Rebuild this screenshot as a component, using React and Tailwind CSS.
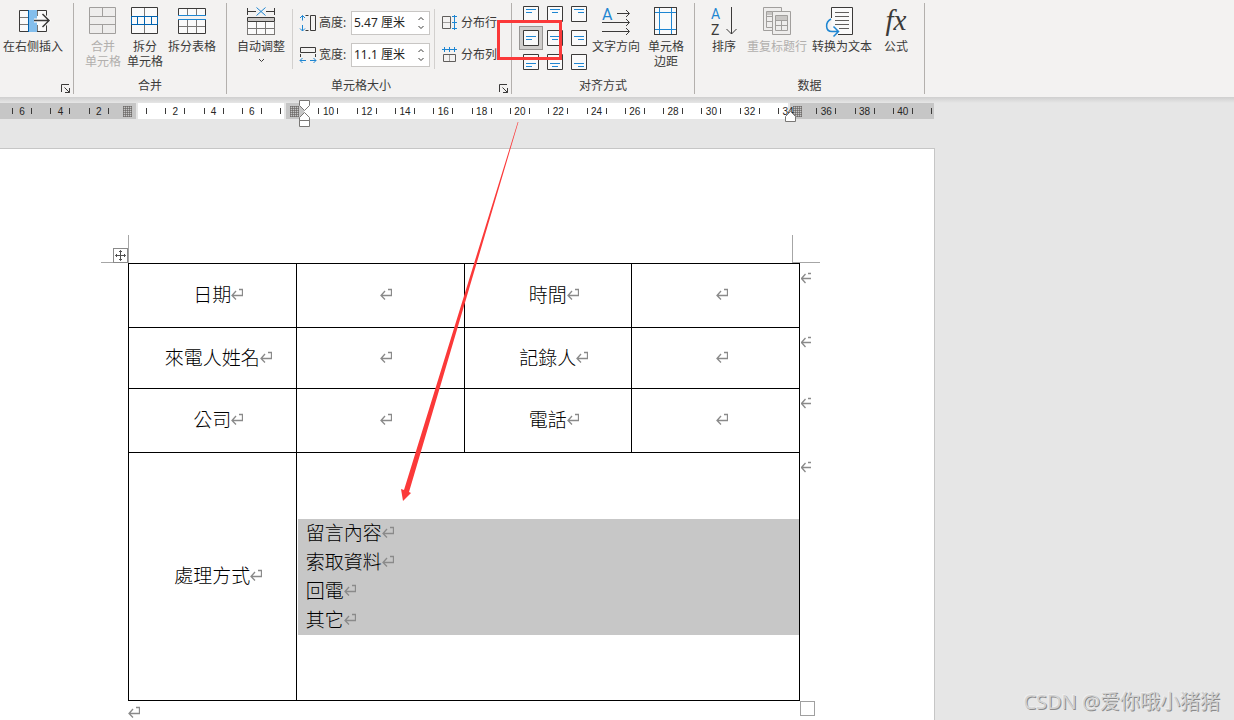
import clsx from "clsx";

const INK = "#3b3a39";
const BLUE = "#1e86d2";
const MUTED = "#a19f9d";

function Icon({ children, size = 32 }) {
  return (
    <svg width={size} height={size} viewBox={`0 0 ${size} ${size}`} fill="none" stroke={INK} className="shrink-0 overflow-visible" aria-hidden="true">
      {children}
    </svg>
  );
}

/* table icons */

const InsertRightIcon = () => (
  <Icon>
    <path d="M2.5 5.5h27v21h-27z" fill="#fafafa" />
    <path d="M3 12.5h8M3 19.5h8M20.5 6v5M20.5 20v6" stroke="#797775" />
    <path d="M11 5h9v22h-9z" fill="#83beec" stroke="none" />
    <path d="M11.5 5v22" stroke="#0063b1" />
    <path d="M17 15.5h15M25 9l6.5 6.5L25 22" stroke="#fafafa" strokeWidth="4" />
    <path d="M17 15.5h15M25.5 9l6.5 6.5-6.5 6.5" strokeWidth="1.5" />
  </Icon>
);

const MergeIcon = () => (
  <Icon>
    <path d="M2.5 2.5h26v26h-26z" fill="#eeedec" stroke={MUTED} />
    <path d="M3 11.5h25M3 19.5h25M15.5 3v8M15.5 20v8" stroke={MUTED} />
  </Icon>
);

const SplitIcon = () => (
  <Icon>
    <path d="M2.5 2.5h26v26h-26z" fill="#fafafa" />
    <path d="M15.5 3v25" stroke="#797775" />
    <path d="M2.5 11.5h26v8h-26zM8.5 12v7M15.5 12v7M22.5 12v7" stroke="#0063b1" />
  </Icon>
);

const SplitTableIcon = () => (
  <Icon>
    <path d="M2.5 3.5h27v7h-27zM2.5 14.5h27v14h-27z" fill="#fafafa" />
    <path d="M11.5 4v6M20.5 4v6M11.5 15v13M20.5 15v13M3 21.5h26" stroke="#797775" />
    <path d="M2 10.5h28M2 14.5h28" stroke={BLUE} />
  </Icon>
);

const AutoFitIcon = () => (
  <Icon>
    <path d="M3 17h26v13H3z" fill="#fafafa" stroke="none" />
    <path d="M2.5 3v7M29.5 3v7M3 6.5h8M21 6.5h8" />
    <path d="M11.5 2.5l9 8M20.5 2.5l-9 8" stroke={BLUE} />
    <path d="M2.5 12.5h27v4h-27z" fill="#c8c6c4" />
    <path d="M2.5 17v13M29.5 17v13M11.5 17v13M20.5 17v13M3 23.5h26M3 29.5h26" stroke="#797775" />
  </Icon>
);

const HeightIcon = () => (
  <Icon size={18}>
    <path d="M3.5 1.5v5M3.5 11v6M1 4l2.5-2.5L6 4M1 14.5L3.5 17 6 14.5" stroke={BLUE} />
    <path d="M6.5 1.5h3M6.5 16.5h3M11.5 1.5h5v15h-5z" />
  </Icon>
);

const WidthIcon = () => (
  <Icon size={18}>
    <path d="M1.5 1.5h15v5h-15zM1.5 8v3M16.5 8v3" />
    <path d="M1 14.5h6M11 14.5h6M3.5 12L1 14.5 3.5 17M14.5 12l2.5 2.5-2.5 2.5" stroke={BLUE} />
  </Icon>
);

const RowsIcon = () => (
  <Icon size={18}>
    <path d="M1.5 2.5h8v12h-8z" stroke="#605e5c" />
    <path d="M2 8.5h7" stroke="#a19f9d" />
    <path d="M13.5 1v15M11 2.5h5M11 8.5h5M11 14.5h5" stroke={BLUE} />
  </Icon>
);

const ColumnsIcon = () => (
  <Icon size={18}>
    <path d="M2.5 8.5h12v7h-12z" stroke="#605e5c" />
    <path d="M8.5 9v6" stroke="#a19f9d" />
    <path d="M1 3.5h15M3.5 1v5M8.5 1v5M13.5 1v5" stroke={BLUE} />
  </Icon>
);

/* alignment icons */

const longLine = "M3 0h10";
const shortLine = ["M3 0h6", "M5 0h6", "M7 0h6"];

function AlignIcon({ row, col }) {
  const y = 3.5 + row * 3;
  return (
    <Icon size={16}>
      <path d="M.5 .5h15v15H.5z" fill="#fafafa" />
      <g stroke={BLUE}>
        <path d={longLine} transform={`translate(0 ${y})`} />
        <path d={shortLine[col]} transform={`translate(0 ${y + 3})`} />
      </g>
    </Icon>
  );
}

const DirectionIcon = () => (
  <Icon>
    <text x="2" y="15" fontSize="16" fontFamily="Roboto, sans-serif" fill={BLUE} stroke="none">A</text>
    <path d="M17 8.5h12M26 5l3.5 3.5L26 12M2 17.5h27M26 14l3.5 3.5L26 21M2 26.5h27M26 23l3.5 3.5L26 30" />
  </Icon>
);

const MarginsIcon = () => (
  <Icon>
    <path d="M4.5 2.5h22v27h-22z" fill="#fafafa" />
    <path d="M9.5 3v26M21.5 3v26M5 7.5h21M5 24.5h21" stroke={BLUE} />
    <path d="M4.5 2.5h22v27h-22z" />
  </Icon>
);

/* data icons */

const SortIcon = () => (
  <Icon>
    <g fontSize="14" fontFamily="Roboto, sans-serif" stroke="none">
      <text x="3" y="14" fill={BLUE}>A</text>
      <text x="3" y="30" fill={INK}>Z</text>
    </g>
    <path d="M23.5 2v27M18.5 24l5 5 5-5" />
  </Icon>
);

const RepeatIcon = () => (
  <Icon>
    <g stroke={MUTED}>
      <path d="M2.5 2.5h18v23h-18z" fill="#eeedec" />
      <path d="M5.5 6.5h6v16h-6zM6 11.5h5M6 16.5h5" />
      <path d="M6 7h5v3H6z" fill="#c8c6c4" stroke="none" />
      <path d="M11.5 6.5h18v23h-18z" fill="#eeedec" />
      <path d="M14.5 10.5h12v15h-12zM15 15.5h11M15 20.5h11M20.5 15v10" />
      <path d="M15 11h11v4H15z" fill="#c8c6c4" stroke="none" />
    </g>
  </Icon>
);

const ConvertIcon = () => (
  <Icon>
    <path d="M5.5 2.5h21v27h-21z" fill="#fafafa" stroke="none" />
    <path d="M5.5 13V2.5h21v27H12" />
    <path d="M9 7.5h14M9 11.5h14M9 15.5h14M9 19.5h14M13 23.5h10" stroke="#605e5c" />
    <path d="M5 14C-1 18-1 27 6 27h6" stroke="#f3f2f1" strokeWidth="4" />
    <path d="M5 14C-1 17-1 26.5 6 26.5h6M7.5 21.5l5 5-5 5" stroke={BLUE} strokeWidth="1.5" />
  </Icon>
);

const FormulaIcon = () => (
  <Icon>
    <text x="16" y="25" fontSize="29" textAnchor="middle" fontStyle="italic" fontFamily="Liberation Serif, serif" fill={INK} stroke="none">fx</text>
  </Icon>
);

/* ribbon */

function BigButton({ icon, lines, disabled, className, children }) {
  return (
    <button
      type="button"
      disabled={disabled}
      className={clsx("flex shrink-0 flex-col items-center whitespace-nowrap text-xs leading-[15px] disabled:text-[#b1afad]", className)}
    >
      {icon}
      <span className="mt-0.5">
        {lines.map((line) => (
          <span key={line} className="block">{line}</span>
        ))}
      </span>
      {children}
    </button>
  );
}

function Group({ title, launcher, className, bodyClass, titleClass, children }) {
  return (
    <section className={clsx("flex h-[91px] shrink-0 flex-col border-r border-[#b3b0ad] pt-0.5", className)}>
      <div className={clsx("flex h-[74px] items-start", bodyClass)}>{children}</div>
      <div className="flex h-4 items-center">
        <h2 className={clsx("flex-1 text-center text-xs", titleClass)}>{title}</h2>
        {launcher && (
          <button type="button" aria-label={`${title || "行和列"}设置`} className="mt-1.5 mr-0.5 ml-1">
            <svg width="10" height="10" fill="none" stroke={INK} aria-hidden="true">
              <path d="M.5 8V.5H8M3.5 3.5l5 5M8.5 4v4.5H4" />
            </svg>
          </button>
        )}
      </div>
    </section>
  );
}

function SizeField({ id, icon, label, value }) {
  return (
    <div className="flex h-6 items-center">
      {icon}
      <label htmlFor={id} className="w-[34px] pl-0.5 text-xs whitespace-nowrap">{label}</label>
      <div className="flex h-6 w-[79px] border border-[#c8c6c4] bg-white">
        <input id={id} type="text" defaultValue={value} className="w-0 flex-1 pl-0.5 text-xs text-[#252423] outline-none" />
        <div className="flex w-4 flex-col items-center justify-evenly">
          <button type="button" aria-label={`增加${label}`}>
            <svg width="6" height="5" fill="none" stroke={INK}><path d="M.5 4L3 1.5 5.5 4" /></svg>
          </button>
          <button type="button" aria-label={`减少${label}`}>
            <svg width="6" height="5" fill="none" stroke={INK}><path d="M.5 1L3 3.5 5.5 1" /></svg>
          </button>
        </div>
      </div>
    </div>
  );
}

const alignNames = [
  ["靠上左对齐", "靠上居中", "靠上右对齐"],
  ["中部左对齐", "水平居中", "中部右对齐"],
  ["靠下左对齐", "靠下居中", "靠下右对齐"],
];

function AlignGrid() {
  return (
    <div className="relative ml-[7px] grid shrink-0 grid-cols-3 -mt-[3px]">
      {alignNames.map((names, row) =>
        names.map((name, col) => {
          const selected = row === 1 && col === 0;
          return (
            <button
              key={name}
              type="button"
              aria-label={name}
              aria-pressed={selected}
              className={clsx("flex size-6 items-center justify-center", selected && "border border-[#979593] bg-[#cfcdcb]")}
            >
              <AlignIcon row={row} col={col} />
            </button>
          );
        })
      )}
      {/* highlight */}
      <div className="pointer-events-none absolute -left-[22px] top-[18px] h-10 w-[65px] border-3 border-[#fb3939]" />
    </div>
  );
}

function Ribbon() {
  return (
    <header className="flex h-[97px] shrink-0 overflow-hidden bg-[#f3f2f1] pt-[3px] text-[#3b3a39]">
      <Group launcher className="w-[74px]" bodyClass="pl-[3px]">
        <BigButton icon={<InsertRightIcon />} lines={["在右侧插入"]} />
      </Group>

      <Group title="合并" className="w-[153px]" bodyClass="pl-[11px]">
        <BigButton icon={<MergeIcon />} lines={["合并", "单元格"]} disabled className="w-9" />
        <BigButton icon={<SplitIcon />} lines={["拆分", "单元格"]} className="ml-1.5 w-9" />
        <BigButton icon={<SplitTableIcon />} lines={["拆分表格"]} className="ml-[5px] w-12" />
      </Group>

      <Group title="单元格大小" launcher className="w-[285px]">
        <BigButton icon={<AutoFitIcon />} lines={["自动调整"]} className="ml-2.5 w-12">
          <svg width="7" height="5" fill="none" stroke={INK} className="mt-1"><path d="M1 1l2.5 2.5L6 1" /></svg>
        </BigButton>
        <div className="ml-[7px] mt-1 flex h-[60px] flex-col justify-between border-x border-[#d2d0ce] px-1 pl-1.5 pt-0.5 pb-0.5">
          <SizeField id="row-height" icon={<HeightIcon />} label="高度:" value="5.47 厘米" />
          <SizeField id="col-width" icon={<WidthIcon />} label="宽度:" value="11.1 厘米" />
        </div>
        <div className="ml-1.5 mt-1.5 flex flex-col gap-2 whitespace-nowrap text-xs">
          <button type="button" className="flex h-6 items-center gap-0.5"><RowsIcon />分布行</button>
          <button type="button" className="flex h-6 items-center gap-0.5"><ColumnsIcon />分布列</button>
        </div>
      </Group>

      <Group title="对齐方式" className="w-[183px]">
        <AlignGrid />
        <BigButton icon={<DirectionIcon />} lines={["文字方向"]} className="ml-px w-12" />
        <BigButton icon={<MarginsIcon />} lines={["单元格", "边距"]} className="ml-2 w-9" />
      </Group>

      <Group title="数据" className="w-[230px]" bodyClass="pl-[13px]">
        <BigButton icon={<SortIcon />} lines={["排序"]} className="w-8" />
        <BigButton icon={<RepeatIcon />} lines={["重复标题行"]} disabled className="ml-[7px] w-[60px]" />
        <BigButton icon={<ConvertIcon />} lines={["转换为文本"]} className="ml-[5px] w-[60px]" />
        <BigButton icon={<FormulaIcon />} lines={["公式"]} className="ml-2 w-8" />
      </Group>
    </header>
  );
}

/* ruler */

const marks = Array.from({ length: 24 }, (_, i) => i * 2 - 6);

function Hatch() {
  return (
    <svg width="9" height="11" stroke="#605e5c" aria-hidden="true">
      <path d="M.5 0v11M2.5 0v11M4.5 0v11M6.5 0v11M8.5 0v11M0 .5h9M0 2.5h9M0 4.5h9M0 6.5h9M0 8.5h9M0 10.5h9" strokeOpacity=".6" />
    </svg>
  );
}

function Tick({ hidden }) {
  return <i className={clsx("h-1.5 w-px bg-[#3b3a39]", hidden && "invisible")} />;
}

function Ruler() {
  return (
    <div className="relative grid h-4 w-[934px] shrink-0">
      <div className="col-start-1 row-start-1 flex">
        <div className="flex w-[136px] items-center justify-end bg-[#c6c6c6] pr-1"><Hatch /></div>
        <div className="ml-0.5 w-[146px] bg-white" />
        <div className="ml-0.5 flex w-[18px] items-center bg-[#c6c6c6] pl-1"><Hatch /></div>
        <div className="w-[484px] bg-white" />
        <div className="ml-0.5 flex flex-1 items-center bg-[#c6c6c6] pl-[3px]"><Hatch /></div>
      </div>
      <div className="col-start-1 row-start-1 ml-[3px] mr-3 grid grid-cols-24 font-['Liberation_Sans',sans-serif] text-[10px] text-[#252423]">
        {marks.map((n) => (
          <div key={n} className="flex items-center justify-center">
            <div className="flex w-5 items-center justify-between">
              <Tick hidden={n === 0} />
              <span>{n !== 0 && n !== 8 && Math.abs(n)}</span>
              <Tick hidden={n === 8 || n === 34} />
            </div>
          </div>
        ))}
      </div>
      <i className="absolute right-0.5 top-[5px] h-1.5 w-px bg-[#3b3a39]" />
      {/* indent markers */}
      <svg width="12" height="28" fill="#fff" stroke="#797775" className="absolute -top-[3px] left-[299px]" aria-hidden="true">
        <path d="M.5 .5h10v5l-5 5-5-5zM5.5 12.5l5 5v3H.5v-3zM.5 20.5h10v6H.5z" />
      </svg>
      <svg width="12" height="12" fill="#fff" stroke="#797775" className="absolute left-[785px] top-2" aria-hidden="true">
        <path d="M5.5 .5l5 5v5H.5v-5z" />
      </svg>
    </div>
  );
}

/* document */

// paragraph mark, takes no room in the line
function Mark() {
  return (
    <svg width="12" height="12" fill="none" stroke="#8a8a8a" strokeWidth="1.3" className="-mr-3 mb-0.5 inline-block align-baseline" aria-hidden="true">
      <path d="M8 1.5h3.5v6H1M5 3L1 7.5 5 11.5" />
    </svg>
  );
}

function RowEnd() {
  return (
    <svg width="11" height="12" fill="none" stroke="#8a8a8a" strokeWidth="1.3" className="absolute left-full top-2 ml-0.5" aria-hidden="true">
      <path d="M7 1.5h3M0 6.5h10M4.5 2L.5 6.5l4 4.500" />
    </svg>
  );
}

const rows = [
  { height: "h-16", cells: ["日期", "", "時間", ""] },
  { height: "h-[61px]", cells: ["來電人姓名", "", "記錄人", ""] },
  { height: "h-16", cells: ["公司", "", "電話", ""] },
];

const notes = ["留言內容", "索取資料", "回電", "其它"];

function CallTable() {
  return (
    <table className="w-full table-fixed border-collapse text-center text-[19px] leading-[25px] font-light text-black">
      <tbody>
        {rows.map((row) => (
          <tr key={row.cells[0]} className={row.height}>
            {row.cells.map((cell, i) => (
              <td key={i} className="relative border border-black p-0 pb-1">
                {cell}<Mark />
                {i === 3 && <RowEnd />}
              </td>
            ))}
          </tr>
        ))}
        <tr className="h-[248px]">
          <td className="border border-black p-0 pb-1">處理方式<Mark /></td>
          <td colSpan={3} className="relative border border-black p-0 pl-px text-left">
            <div className="bg-[#c7c7c7] pl-2">
              {notes.map((note) => (
                <p key={note} className="pb-1">{note}<Mark /></p>
              ))}
            </div>
            <RowEnd />
          </td>
        </tr>
      </tbody>
    </table>
  );
}

function Page() {
  return (
    <main className="mt-[29px] w-[935px] flex-1 border-t border-r border-[#c6c6c6] bg-white pl-32 pr-[134px] pt-[114px] font-['Noto_Sans_CJK_TC',sans-serif]">
      <div className="relative">
        <CallTable />
        {/* corner guides and handles */}
        <i className="absolute -left-[27px] -top-7 h-7 w-7 border-r border-b border-[#a6a6a6]" />
        <i className="absolute -right-5 -top-7 h-7 w-7 border-b border-l border-[#a6a6a6]" />
        <button type="button" aria-label="移动表格" className="absolute -left-[15px] -top-[15px] size-[15px] border border-[#8a8a8a] bg-white">
          <svg width="13" height="13" fill="none" stroke="#505050" aria-hidden="true">
            <path d="M6.5 1.5v10M1.5 6.5h10M5 3l1.5-1.5L8 3M5 10l1.5 1.5L8 10M3 5L1.5 6.5 3 8M10 5l1.5 1.5L10 8" />
          </svg>
        </button>
        <button type="button" aria-label="调整表格大小" className="absolute -right-[15px] -bottom-[15px] size-[15px] border border-[#a0a0a0] bg-white" />
      </div>
      <p className="h-5 pt-1 leading-4"><Mark /></p>
    </main>
  );
}

export default function App() {
  return (
    <div className="relative flex h-screen flex-col overflow-hidden bg-[#e6e6e6] font-['Noto_Sans','Noto_Sans_CJK_SC',sans-serif]">
      <Ribbon />
      <div className="h-1.5 shrink-0 bg-linear-to-b from-[#cfcfcf] to-[#e6e6e6]" />
      <Ruler />
      <Page />

      {/* pointer from the ribbon to the selected text */}
      <svg width="130" height="390" fill="#fb3939" className="pointer-events-none absolute left-[395px] top-[120px]" aria-hidden="true">
        <path d="M122.8 2h.6L14 372l2 1-8 8-2-12 3 1z" />
      </svg>

      <p className="absolute right-3.5 bottom-1 text-[20px] leading-7 text-[#d2d2d2] [text-shadow:1px_1px_0_#8c8c8c,-1px_-1px_0_#eeeeee]">
        CSDN @爱你哦小猪猪
      </p>
    </div>
  );
}
